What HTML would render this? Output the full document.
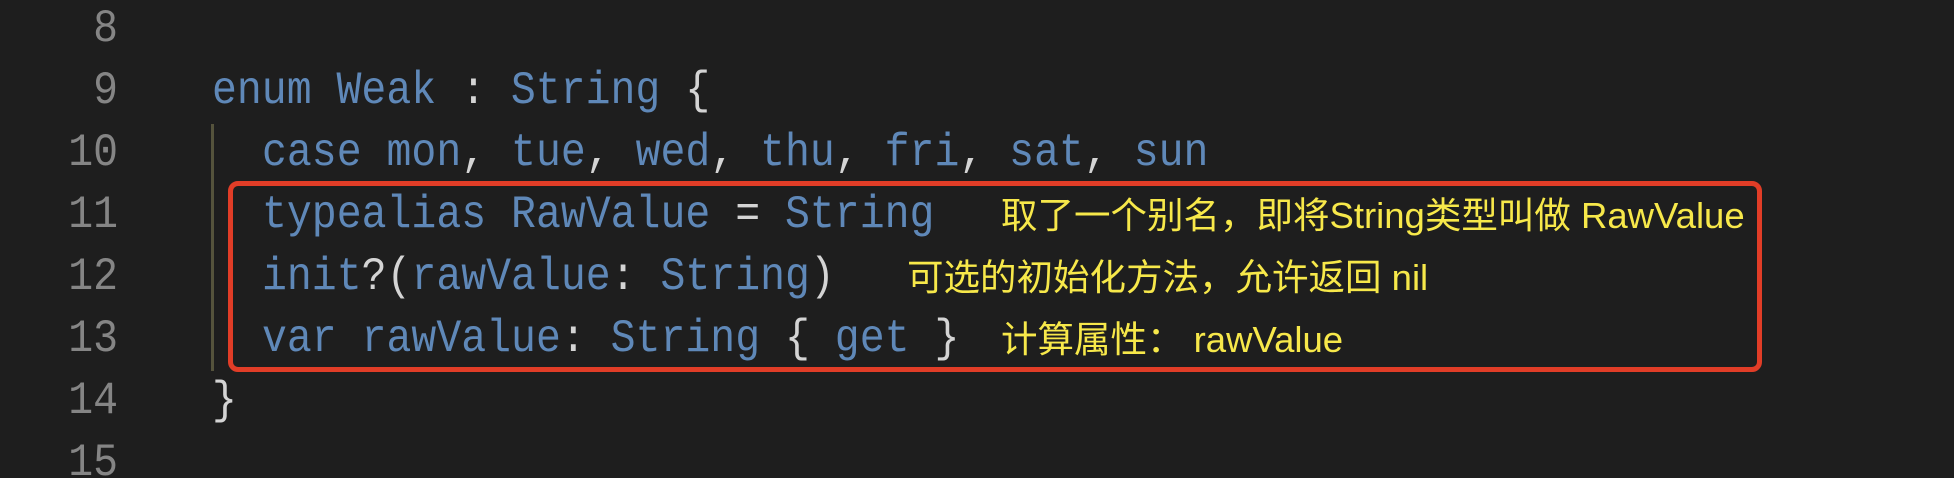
<!DOCTYPE html>
<html><head><meta charset="utf-8"><style>
html,body{margin:0;padding:0;background:#1e1e1e;width:1954px;height:478px;overflow:hidden;position:relative}
.l{position:absolute;left:0;height:62px;line-height:62px;font-family:"Liberation Mono",monospace;font-size:41.5px;color:#5f88b8;white-space:pre;transform:scaleY(1.12);transform-origin:center}
.n{position:absolute;right:1836px;width:100px;text-align:right;color:#858585;font-family:"Liberation Mono",monospace;font-size:41.5px;height:62px;line-height:62px;transform:scaleY(1.12)}
.p{color:#d4d4d4}
.c{position:absolute;font-family:"Liberation Sans","Noto Sans CJK SC",sans-serif;font-size:36.5px;color:#f7e84a;height:62px;line-height:62px;white-space:pre}
</style></head><body>
<div class="n" style="top:-1px">8</div>
<div class="n" style="top:61px">9</div>
<div class="n" style="top:123px">10</div>
<div class="n" style="top:185px">11</div>
<div class="n" style="top:247px">12</div>
<div class="n" style="top:309px">13</div>
<div class="n" style="top:371px">14</div>
<div class="n" style="top:433px">15</div>

<div style="position:absolute;left:211px;top:124px;width:3px;height:247px;background:#55533c"></div>

<div class="l" style="top:61px;left:212px">enum Weak <span class="p">:</span> String <span class="p">{</span></div>
<div class="l" style="top:123px;left:262px">case mon<span class="p">,</span> tue<span class="p">,</span> wed<span class="p">,</span> thu<span class="p">,</span> fri<span class="p">,</span> sat<span class="p">,</span> sun</div>
<div class="l" style="top:185px;left:262px">typealias RawValue <span class="p">=</span> String</div>
<div class="l" style="top:247px;left:262px">init<span class="p">?(</span>rawValue<span class="p">:</span> String<span class="p">)</span></div>
<div class="l" style="top:309px;left:262px">var rawValue<span class="p">:</span> String <span class="p">{</span> get <span class="p">}</span></div>
<div class="l" style="top:371px;left:212px"><span class="p">}</span></div>

<div class="c" style="top:185px;left:1001px">取了一个别名，即将String类型叫做 RawValue</div>
<div class="c" style="top:247px;left:907px">可选的初始化方法，允许返回 nil</div>
<div class="c" style="top:309px;left:1001px">计算属性： rawValue</div>

<div style="position:absolute;left:228px;top:181px;width:1524px;height:181px;border:5px solid #e13d27;border-radius:10px"></div>
</body></html>
